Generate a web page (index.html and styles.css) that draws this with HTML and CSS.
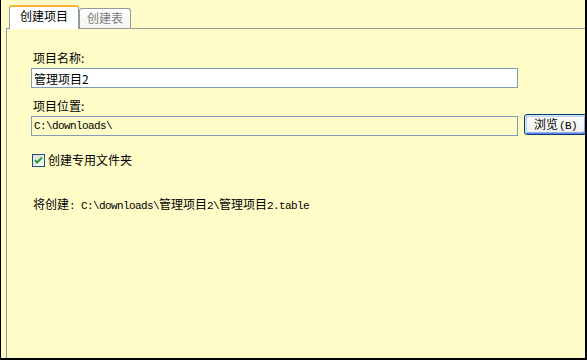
FILE: index.html
```html
<!DOCTYPE html>
<html lang="zh-CN">
<head>
    <meta charset="UTF-8">
    <meta name="viewport" content="width=device-width, initial-scale=1.0">
    <title>创建项目</title>
    <link rel="stylesheet" href="styles.css">
</head>
<body>

    <div class="window">

        <!-- Tab strip -->
        <div class="tabs">
            <div class="tab active">创建项目</div>
            <div class="tab">创建表</div>
        </div>

        <!-- Tab page -->
        <div class="panel">
            <label class="field-label" for="project-name">项目名称:</label>
            <input type="text" class="text-input" id="project-name" value="管理项目2">

            <label class="field-label second" for="project-path">项目位置:</label>
            <div class="path-row">
                <input type="text" class="text-input path" id="project-path" value="C:\downloads\" readonly>
                <button type="button" class="browse-button">浏览<span class="mono">(B)</span></button>
            </div>

            <label class="check-row">
                <svg class="check-box" width="13" height="13" viewBox="0 0 13 13">
                    <defs>
                        <linearGradient id="box-fill" x1="0" y1="0" x2="1" y2="1">
                            <stop offset="0" stop-color="#dcdcd7"/>
                            <stop offset="1" stop-color="#ffffff"/>
                        </linearGradient>
                    </defs>
                    <rect x="0.5" y="0.5" width="12" height="12" fill="url(#box-fill)" stroke="#1c5180"/>
                    <path d="M3 6 L5 8.5 L10 3.5" fill="none" stroke="#21a121" stroke-width="2"/>
                </svg>
                创建专用文件夹
            </label>

            <p class="result">将创建<span class="mono">: C:\downloads\</span>管理项目<span class="mono">2\</span>管理项目<span class="mono">2.table</span></p>
        </div>

    </div>

</body>
</html>
```

FILE: styles.css
```css
html, body {
    margin: 0;
    height: 100%;
    overflow: hidden;
    background-color: #fffcc8;
    font-family: "Noto Sans CJK SC", "Liberation Sans", sans-serif;
    font-size: 12px;
    color: #000;
}

.mono {
    font-family: "Liberation Mono", monospace;
    font-size: 11px;
    letter-spacing: -0.6px;
}

.window {
    box-sizing: border-box;
    width: 587px;
    height: 360px;
    display: flex;
    flex-direction: column;
    padding: 5px 0 0 5px;
    border-left: 1px solid #000;
    border-right: 2px solid #000;
    border-bottom: 2px solid #000;
    overflow: hidden;
}

/* Tabs */
.tabs {
    display: flex;
    align-items: flex-end;
    height: 24px;
    padding-left: 3px;
    margin-bottom: -1px;
}

.tab {
    box-sizing: border-box;
    height: 21px;
    padding: 0 7px;
    line-height: 17px;
    color: #7a7a7a;
    background: linear-gradient(#ffffff, #f4f3ee);
    border: 1px solid #919b9c;
    border-bottom: none;
    border-radius: 3px 3px 0 0;
}

.tab.active {
    position: relative;
    z-index: 1;
    height: 24px;
    padding: 1px 10px 0;
    line-height: 16px;
    color: #000;
    background: #fff;
    border-top: 2px solid #f7b43a;
}

/* Page */
.panel {
    flex: 1;
    padding: 22px 0 0 24px;
    border-top: 1px solid #919b9c;
    border-left: 1px solid #919b9c;
}

.field-label {
    display: block;
    padding-left: 2px;
    line-height: 14px;
    margin-bottom: 3px;
}

.field-label.second {
    margin-top: 11px;
    margin-bottom: 1px;
}

.text-input {
    box-sizing: border-box;
    display: block;
    flex-shrink: 0;
    width: 487px;
    height: 20px;
    margin: 0;
    padding: 0 2px;
    border: 1px solid #7f9db9;
    background-color: #fff;
    font-family: "Noto Sans CJK SC", "Liberation Sans", sans-serif;
    font-size: 12px;
    color: #000;
    outline: none;
}

.text-input.path {
    background-color: #fffcc8;
    font-family: "Liberation Mono", monospace;
    font-size: 11px;
    letter-spacing: -0.6px;
}

.path-row {
    display: flex;
    align-items: flex-end;
    gap: 6px;
}

.browse-button {
    box-sizing: border-box;
    flex-shrink: 0;
    width: 63px;
    height: 21px;
    margin: 0 0 1px;
    padding: 0;
    border: 1px solid #003c74;
    border-radius: 3px;
    background: linear-gradient(#ffffff, #f0f0ea);
    box-shadow: inset 1px 1px 0 #cee7ff, inset -1px -1px 0 #6982ee, inset 2px 2px 0 #bcd4f6, inset -2px -2px 0 #89adf4;
    font-family: "Noto Sans CJK SC", "Liberation Sans", sans-serif;
    font-size: 12px;
    line-height: 17px;
    color: #000;
    text-align: center;
    white-space: nowrap;
}

.browse-button .mono {
    padding-left: 1px;
}

.check-row {
    display: flex;
    align-items: center;
    gap: 3px;
    margin-top: 17px;
    padding-left: 1px;
    line-height: 14px;
}

.check-box {
    display: block;
}

.result {
    margin: 30px 0 0;
    padding-left: 2px;
    line-height: 14px;
}
```
